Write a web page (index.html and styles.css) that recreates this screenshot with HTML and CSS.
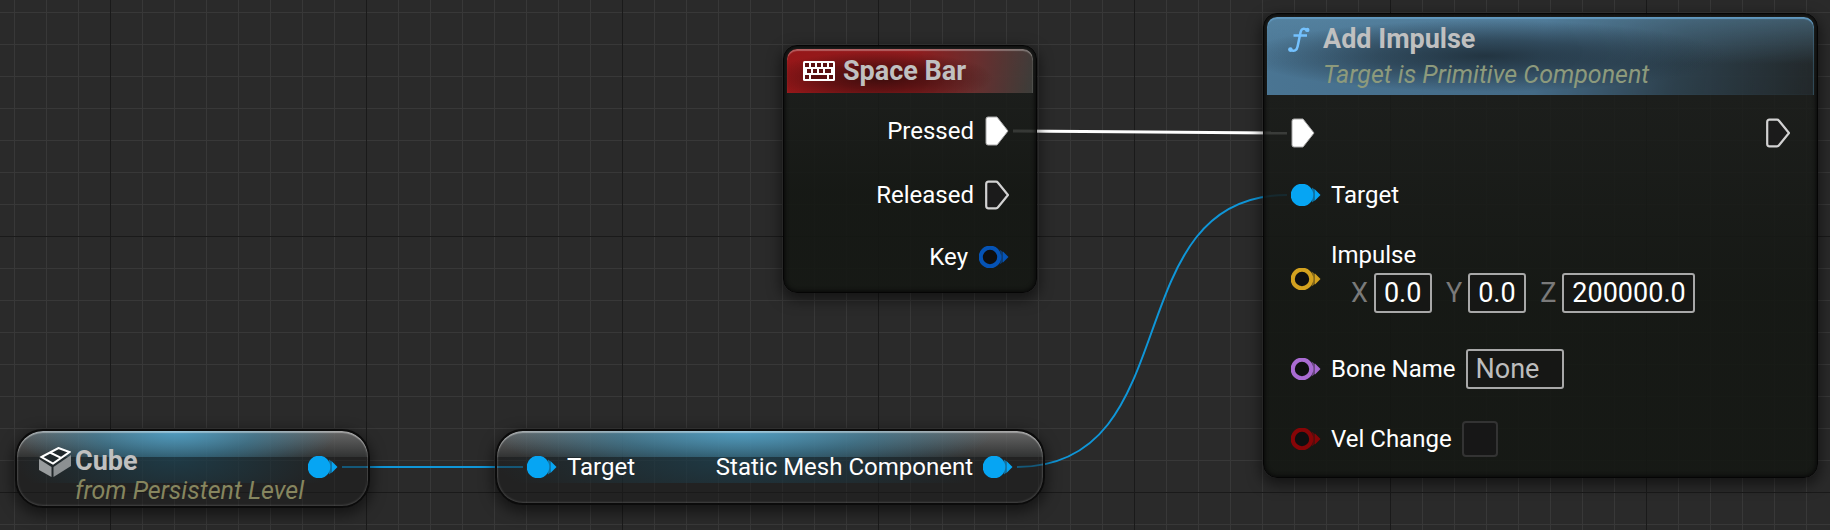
FILE: index.html
```html
<!DOCTYPE html>
<html lang="en">
<head>
<meta charset="utf-8">
<title>Event Graph</title>
<link rel="stylesheet" href="styles.css">
</head>
<body>
<svg class="defs" aria-hidden="true">
  <symbol id="exec-on" viewBox="0 0 24 30"><path d="M1 3Q1 1 3 1H12L23 15L12 29H3Q1 29 1 27Z" fill="#fff" stroke="#aaa" stroke-width="1"/></symbol>
  <symbol id="exec-off" viewBox="0 0 24 30"><path d="M1.200 4Q1.200 1.700 3.500 1.700H11Q12.200 1.700 13 2.700L23 15L13 27.300Q12.200 28.300 11 28.300H3.500Q1.200 28.300 1.200 26Z" fill="#1b1b1b" stroke="#d2d2d2" stroke-width="2.200"/></symbol>
  <symbol id="pin-on" viewBox="0 0 30 22"><circle cx="11" cy="11" r="11.300" fill="currentColor"/><path d="M23.500 5L29.500 11L23.500 17Z" fill="currentColor"/><path d="M21 3.500L23.500 5.500V16.500L21 18.500Z" fill="currentColor" opacity=".6"/></symbol>
  <symbol id="pin-off" viewBox="0 0 30 22"><circle cx="11" cy="11" r="9.300" fill="#0e0f10" stroke="currentColor" stroke-width="4.200"/><path d="M24 5.500L29.500 11L24 16.500Z" fill="currentColor"/><path d="M20.500 3.500L24 6V16L20.500 18.500Q23.500 11 20.500 3.500Z" fill="currentColor" opacity=".6"/></symbol>
</svg>

<main class="graph">
  <svg class="wires" aria-hidden="true">
    <path class="wire wire-exec" d="M1013 131C1100 131 1200 133 1287 133"/>
    <path class="wire" d="M342 467H523"/>
    <path class="wire" d="M1017 467C1190 467 1114 195 1287 195"/>
  </svg>

  <section class="node event-node">
    <header class="head head-red">
      <svg class="key-icon" viewBox="0 0 32 20"><rect width="32" height="20" rx="1.500" fill="#fff"/><path fill="#5b1011" d="M2 2h4v4H2zM8 2h4v4H8zM14 2h4v4h-4zM20 2h4v4h-4zM26 2h4v4h-4zM4 8h4v4H4zM10 8h4v4h-4zM16 8h4v4h-4zM22 8h6v4h-6zM2 14h4v4H2zM8 14h16v4H8zM26 14h4v4h-4z"/></svg>
      <h2 class="title">Space Bar</h2>
    </header>
    <div class="event-pins">
      <div class="out">Pressed <svg class="exec"><use href="#exec-on"/></svg></div>
      <div class="out">Released <svg class="exec"><use href="#exec-off"/></svg></div>
      <div class="out">Key <svg class="pin blue-dark"><use href="#pin-off"/></svg></div>
    </div>
  </section>

  <section class="node call-node">
    <header class="head head-blue">
      <svg class="fn-icon" viewBox="0 0 22 26"><path d="M19 3.500C16.500 .7 13.300 1.200 12.500 5.500L9.600 19.500C8.900 23.500 6 25 2.500 22.800M5.500 8.500H19" fill="none" stroke="#74c2ff" stroke-width="2.500"/><circle cx="19.300" cy="2.900" r="2.200" fill="#74c2ff"/><circle cx="2.400" cy="22.600" r="2.300" fill="#74c2ff"/></svg>
      <div>
        <h2 class="title">Add Impulse</h2>
        <p class="subtitle">Target is Primitive Component</p>
      </div>
    </header>
    <div class="call-pins">
      <div class="in exec-row"><svg class="exec"><use href="#exec-on"/></svg><svg class="exec"><use href="#exec-off"/></svg></div>
      <div class="in"><svg class="pin blue"><use href="#pin-on"/></svg>Target</div>
      <div class="in"><svg class="pin yellow"><use href="#pin-off"/></svg>
        <div class="vector">
          <span>Impulse</span>
          <div class="axes">
            <label for="ix">X</label><input class="field num" id="ix" value="0.0">
            <label for="iy">Y</label><input class="field num" id="iy" value="0.0">
            <label for="iz">Z</label><input class="field num wide" id="iz" value="200000.0">
          </div>
        </div>
      </div>
      <div class="in"><svg class="pin purple"><use href="#pin-off"/></svg><label for="bone">Bone Name</label><input class="field name" id="bone" value="None"></div>
      <div class="in"><svg class="pin red"><use href="#pin-off"/></svg><label for="vel">Vel Change</label><input class="check" type="checkbox" id="vel"></div>
    </div>
  </section>

  <section class="pill cube-node">
    <svg class="cube-icon" viewBox="0 0 32 30"><path d="M0 12L12.500 20V30L0 23Z" fill="#999c9e"/><path d="M32 8V19L14.500 30V20Z" fill="#8c9092"/><path d="M2.500 10L19.500 1L30.500 5L14 16.500Z" fill="#20282c" stroke="#fff" stroke-width="2"/><path d="M11 5.500L22 10.800" fill="none" stroke="#fff" stroke-width="2"/></svg>
    <div class="cube-text">
      <h2 class="title">Cube</h2>
      <p class="subtitle">from Persistent Level</p>
    </div>
    <svg class="pin blue"><use href="#pin-on"/></svg>
  </section>

  <section class="pill mesh-node">
    <svg class="pin blue"><use href="#pin-on"/></svg>
    <span class="mesh-in">Target</span>
    <span>Static Mesh Component</span>
    <svg class="pin blue"><use href="#pin-on"/></svg>
  </section>
</main>
</body>
</html>
```

FILE: styles.css
```css
* { box-sizing: border-box; }
body {
  margin: 0;
  background: #2a2a2a;
  color: #fff;
  font: 24px/28px Roboto, "Liberation Sans", sans-serif;
}
h2, p { margin: 0; }
.defs { position: absolute; width: 0; height: 0; }

/* canvas with a 32px grid and a darker line on every eighth cell */
.graph {
  position: relative;
  min-height: 100vh;
  overflow: hidden;
  background-color: #2a2a2a;
  background-image:
    linear-gradient(to right, #1a1a1a 1px, transparent 1px),
    linear-gradient(to bottom, #1a1a1a 1px, transparent 1px),
    linear-gradient(to right, #383838 1px, transparent 1px),
    linear-gradient(to bottom, #383838 1px, transparent 1px);
  background-size: 256px 256px, 256px 256px, 32px 32px, 32px 32px;
  background-position: 110px 0, 0 236px, 14px 0, 0 12px;
}
.wires { position: absolute; inset: 0; width: 100%; height: 100%; }
.wire { fill: none; stroke: #0f96d8; stroke-width: 2; }
.wire-exec { stroke: #fff; stroke-width: 3; }

.title { font-size: 27px; line-height: 32px; font-weight: 700; color: #c0c0c0; }
.subtitle { font-size: 25px; font-style: italic; color: #8d9a7c; }

/* square nodes */
.node {
  position: absolute;
  padding: 3px;
  border-radius: 14px;
  border: 1px solid #050505;
  background: linear-gradient(to bottom, rgba(28, 30, 28, .82), rgba(20, 23, 19, .9) 60%);
  background-clip: padding-box;
  box-shadow: inset 0 0 4px 1px #080808, 0 5px 14px 2px rgba(0, 0, 0, .5);
}
.event-node { left: 783px; top: 45px; width: 254px; }
.call-node { left: 1263px; top: 13px; width: 555px; }

.head { display: flex; border-radius: 10px 10px 0 0; }
.head-red {
  gap: 8px;
  height: 44px;
  padding: 6px 16px;
  box-shadow: inset 0 2px 1px rgba(255, 255, 255, .3), inset -1px 0 1px rgba(255, 255, 255, .08);
  background:
    radial-gradient(ellipse 46% 60% at 38% 65%, rgba(45, 10, 10, .85), rgba(50, 10, 10, .55) 45%, transparent),
    linear-gradient(100deg, #971719 0%, #911c1e 50%, rgba(125, 50, 50, .8) 75%, rgba(70, 72, 68, .75) 100%);
}
.head-blue {
  gap: 13px;
  height: 78px;
  padding: 6px 21px;
  box-shadow: inset 0 2px 1px #6198bf, inset -1px 0 1px rgba(80, 140, 170, .3);
  background:
    radial-gradient(ellipse 44% 46% at 40% 50%, rgba(28, 42, 52, .85), rgba(32, 48, 60, .6) 45%, transparent),
    linear-gradient(to bottom, rgba(94, 142, 172, .5), transparent 60%),
    linear-gradient(100deg, #4a7593 0%, #446a86 50%, rgba(52, 78, 96, .7) 75%, rgba(38, 46, 51, .6) 100%);
}
.key-icon { width: 32px; height: 20px; margin-top: 6px; }
.fn-icon { width: 22px; height: 26px; margin-top: 4px; }
.head-blue .subtitle { margin-top: 6px; }

.exec { width: 24px; height: 30px; flex: none; }
.pin { width: 30px; height: 22px; flex: none; }
.blue { color: #06a5f3; }
.blue-dark { color: #0553b5; }
.yellow { color: #d3a11f; }
.purple { color: #a96bd2; }
.red { color: #860507; }

.event-pins { display: grid; grid-template-rows: 64px 64px 60px; padding: 6px 24px 2px; }
.out { display: flex; align-items: center; justify-content: flex-end; gap: 11px; }

.call-pins { display: grid; grid-template-rows: 64px 62px 106px 74px 66px; padding: 5px 24px 2px; }
.in { display: flex; align-items: center; gap: 10px; }
.exec-row { justify-content: space-between; padding-top: 2px; }
.vector { display: flex; flex-direction: column; gap: 4px; padding-bottom: 4px; }
.axes { display: flex; align-items: center; padding-left: 20px; font-size: 27px; color: #7a7a7a; }
.axes label { margin-right: 6px; }
.axes .num { margin-right: 14px; }

.field {
  height: 40px;
  padding: 0 8px;
  border: 2px solid #a8a8a8;
  border-radius: 3px;
  background: #161715;
  color: #fff;
  font: inherit;
  font-size: 27px;
}
.num { width: 58px; }
.wide { width: 133px; }
.name { width: 98px; color: #bdbdbd; }
.check {
  appearance: none;
  width: 36px;
  height: 36px;
  margin: 0;
  border: 2px solid #333;
  border-radius: 4px;
  background: #171717;
}

/* rounded variable nodes */
.pill {
  position: absolute;
  display: flex;
  border: 2px solid #0b0b0b;
  border-radius: 28px;
  background:
    radial-gradient(ellipse 46% 52px at 45% 0, rgba(75, 170, 215, .8), rgba(50, 140, 180, .5) 50%, transparent) 0 0 / 100% 26px no-repeat,
    linear-gradient(to bottom, rgba(150, 150, 150, .6), rgba(65, 68, 68, .5)) 0 0 / 100% 26px no-repeat,
    radial-gradient(ellipse 46% 60px at 45% 0, rgba(28, 75, 95, .6), rgba(28, 65, 80, .4) 50%, transparent) 0 26px / 100% 26px no-repeat,
    rgba(26, 26, 26, .5);
  background-clip: padding-box;
  box-shadow: inset 0 2px 1px rgba(255, 255, 255, .35), inset 0 0 2px 1px rgba(255, 255, 255, .15), 0 5px 14px 2px rgba(0, 0, 0, .5);
}
.cube-node { left: 15px; top: 429px; width: 355px; height: 79px; padding: 15px 30px 0 22px; }
.cube-icon { width: 32px; height: 30px; margin: 1px 4px 0 0; }
.cube-text { flex: 1; }
.cube-text .title { line-height: 30px; }
.cube-text .subtitle { color: #86865f; margin-top: 1px; }
.cube-node .pin { margin-top: 10px; }
.mesh-node { left: 495px; top: 429px; width: 550px; height: 76px; padding: 0 30px; align-items: center; gap: 10px; }
.mesh-in { flex: 1; }
```
